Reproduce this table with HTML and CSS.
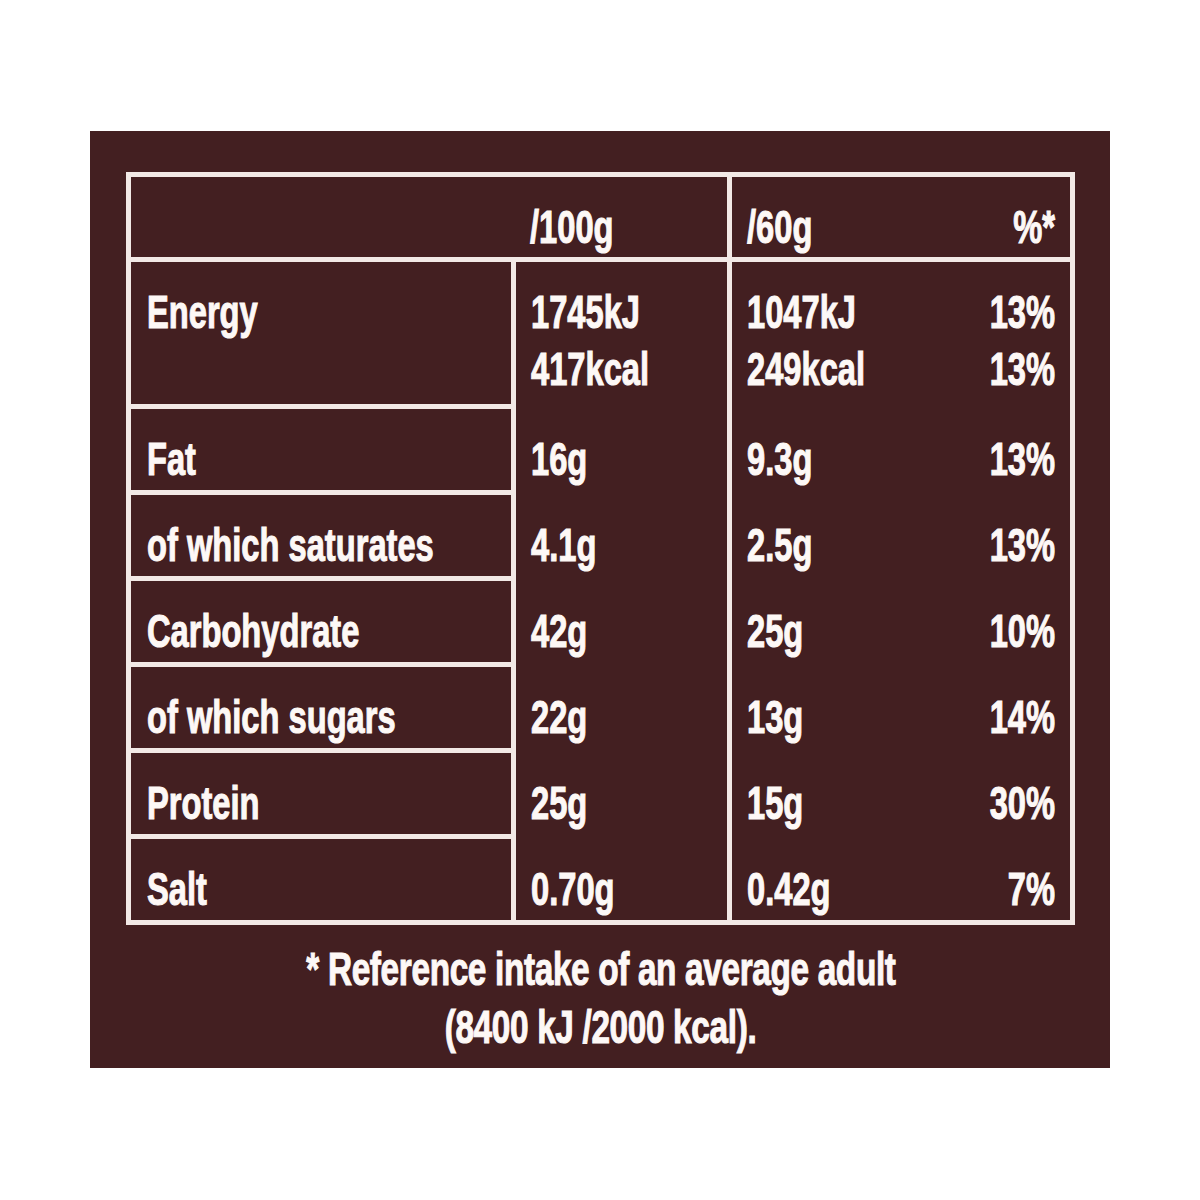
FILE: index.html
```html
<!DOCTYPE html>
<html lang="en">
<head>
<meta charset="utf-8">
<title>Nutrition information</title>
<link rel="stylesheet" href="styles.css">
</head>
<body>
<div class="page">
  <div class="panel">
    <div class="nutrition">
      <div class="cell head head-main"><span class="t">/100g</span></div>
      <div class="cell head head-serving"><span class="t">/60g</span><span class="t tr">%*</span></div>

      <div class="cell label r2"><span class="t">Energy</span></div>
      <div class="cell label r3"><span class="t">Fat</span></div>
      <div class="cell label r4"><span class="t">of which saturates</span></div>
      <div class="cell label r5"><span class="t">Carbohydrate</span></div>
      <div class="cell label r6"><span class="t">of which sugars</span></div>
      <div class="cell label r7"><span class="t">Protein</span></div>
      <div class="cell label r8"><span class="t">Salt</span></div>

      <div class="cell values col-100">
        <div class="vrow"><div class="line"><span class="t">1745kJ</span></div><div class="line"><span class="t">417kcal</span></div></div>
        <div class="vrow"><div class="line"><span class="t">16g</span></div></div>
        <div class="vrow"><div class="line"><span class="t">4.1g</span></div></div>
        <div class="vrow"><div class="line"><span class="t">42g</span></div></div>
        <div class="vrow"><div class="line"><span class="t">22g</span></div></div>
        <div class="vrow"><div class="line"><span class="t">25g</span></div></div>
        <div class="vrow"><div class="line"><span class="t">0.70g</span></div></div>
      </div>

      <div class="cell values col-serving">
        <div class="vrow">
          <div class="line split"><span class="t">1047kJ</span><span class="t tr">13%</span></div>
          <div class="line split"><span class="t">249kcal</span><span class="t tr">13%</span></div>
        </div>
        <div class="vrow"><div class="line split"><span class="t">9.3g</span><span class="t tr">13%</span></div></div>
        <div class="vrow"><div class="line split"><span class="t">2.5g</span><span class="t tr">13%</span></div></div>
        <div class="vrow"><div class="line split"><span class="t">25g</span><span class="t tr">10%</span></div></div>
        <div class="vrow"><div class="line split"><span class="t">13g</span><span class="t tr">14%</span></div></div>
        <div class="vrow"><div class="line split"><span class="t">15g</span><span class="t tr">30%</span></div></div>
        <div class="vrow"><div class="line split"><span class="t">0.42g</span><span class="t tr">7%</span></div></div>
      </div>
    </div>
    <div class="note">
      <div class="note-line"><span class="t tc">* Reference intake of an average adult</span></div>
      <div class="note-line"><span class="t tc">(8400 kJ /2000 kcal).</span></div>
    </div>
  </div>
</div>
</body>
</html>
```

FILE: styles.css
```css
html, body {
  margin: 0;
  padding: 0;
  background: #ffffff;
}

.page {
  padding: 131px 90px 0 90px;
}

.panel {
  background: #431f21;
  padding: 41px 35px 12px 36px;
  color: #fdf8f6;
  font-family: "Liberation Sans", Arial, sans-serif;
  font-weight: bold;
  font-size: 47px;
  line-height: 57px;
}

.nutrition {
  display: grid;
  grid-template-columns: 380px 211px 338px;
  grid-template-rows: 80px 142px repeat(6, 81px);
  gap: 5px;
  padding: 5px;
  background: #f2e9e6;
}

.cell {
  background: #431f21;
  white-space: nowrap;
  box-sizing: border-box;
}

.t {
  display: inline-block;
  transform: scaleX(0.695);
  transform-origin: left center;
  -webkit-text-stroke: 1.1px currentColor;
}

.t.tr {
  transform-origin: right center;
}

.t.tc {
  transform-origin: center center;
  transform: scaleX(0.71);
  letter-spacing: -0.5px;
}

.head {
  padding-top: 21px;
}

.head-main {
  grid-column: 1 / 3;
  padding-left: 399px;
}

.head-serving {
  grid-column: 3;
  display: flex;
  justify-content: space-between;
  padding-left: 15px;
  padding-right: 15px;
}

.label {
  grid-column: 1;
  padding: 21px 0 0 16px;
}

.r2 { grid-row: 2; }
.r3 { grid-row: 3; }
.r4 { grid-row: 4; }
.r5 { grid-row: 5; }
.r6 { grid-row: 6; }
.r7 { grid-row: 7; }
.r8 { grid-row: 8; }

.values {
  grid-row: 2 / 9;
  display: grid;
  grid-template-rows: 142px repeat(6, 81px);
  row-gap: 5px;
}

.col-100 {
  grid-column: 2;
  padding-left: 15px;
}

.col-serving {
  grid-column: 3;
  padding-left: 15px;
  padding-right: 15px;
}

.vrow {
  padding-top: 21px;
}

.line.split {
  display: flex;
  justify-content: space-between;
}

.note {
  margin-top: 15px;
  text-align: center;
  line-height: 58px;
  white-space: nowrap;
}
```
